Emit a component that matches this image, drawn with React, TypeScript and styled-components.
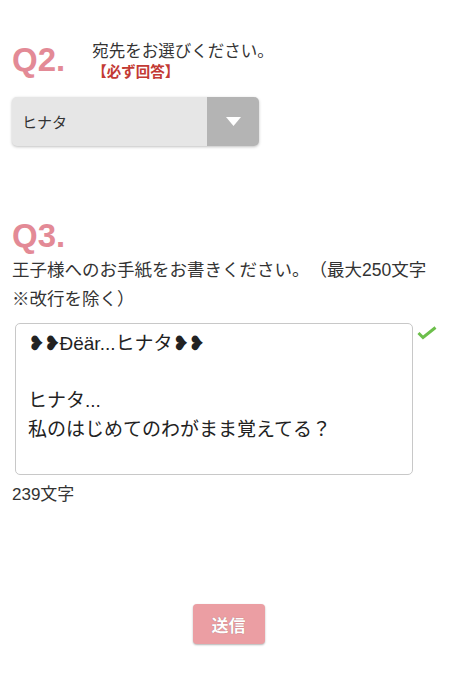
import React from 'react';
import styled, { createGlobalStyle } from 'styled-components';

const Global = createGlobalStyle`
  html, body {
    margin: 0;
    padding: 0;
    background: #fff;
  }
  body {
    font-family: "Liberation Sans", "Noto Sans CJK JP", sans-serif;
    color: #333;
    text-spacing-trim: space-all;
  }
`;

const Page = styled.div`
  width: 464px;
  height: 680px;
  padding: 40px 12px 0 12px;
  box-sizing: border-box;
  display: flex;
  flex-direction: column;
`;

const QuestionHead = styled.div`
  display: flex;
  align-items: flex-start;
  gap: 27px;
`;

const QNum = styled.div`
  font-family: "Liberation Sans", Arial, sans-serif;
  font-weight: 700;
  font-size: 33px;
  line-height: 40px;
  color: #e38a96;
`;

const QTitle = styled.div`
  display: flex;
  flex-direction: column;
`;

const Label = styled.div`
  font-size: 16.5px;
  line-height: 22px;
  color: #333;
`;

const Required = styled.div`
  font-size: 14.5px;
  line-height: 20px;
  font-weight: 700;
  color: #c33a34;
`;

const Select = styled.div`
  margin-top: 15px;
  width: 247px;
  height: 49px;
  border-radius: 5px;
  background: #e6e6e6;
  box-shadow: 0 1px 3px rgba(0, 0, 0, 0.25);
  display: flex;
  overflow: hidden;
`;

const SelectValue = styled.div`
  flex: 1;
  padding-left: 10px;
  display: flex;
  align-items: center;
  font-size: 15px;
  color: #333;
`;

const SelectArrow = styled.div`
  width: 52px;
  background: #b4b4b4;
  display: flex;
  align-items: center;
  justify-content: center;
`;

const Q3Head = styled(QNum)`
  margin-top: 70px;
`;

const Desc = styled.div`
  font-size: 17.5px;
  line-height: 29px;
  color: #333;
  white-space: nowrap;
`;

const FieldRow = styled.div`
  margin-top: 9px;
  display: flex;
  align-items: flex-start;
  gap: 4px;
  padding-left: 3px;
`;

const TextBox = styled.div`
  width: 398px;
  height: 152px;
  box-sizing: border-box;
  border: 1px solid #c8c8c8;
  border-radius: 5px;
  padding: 6px 12px;
  font-size: 19px;
  line-height: 28.5px;
  color: #222;
  white-space: pre-wrap;
`;

const Hearts = styled.span`
  font-family: "DejaVu Sans", sans-serif;
  font-size: 20px;
  line-height: 1;
  letter-spacing: -1px;
`;

const Check = styled.svg`
  margin-top: 3px;
  flex-shrink: 0;
`;

const Count = styled.div`
  margin-top: 9px;
  font-size: 17px;
  line-height: 22px;
  color: #333;
`;

const Submit = styled.button`
  align-self: center;
  margin-top: 98px;
  margin-right: 7px;
  width: 72px;
  height: 40px;
  border: none;
  border-radius: 4px;
  background: #eb9ea3;
  color: #fff;
  font-family: "Noto Sans CJK JP", sans-serif;
  font-size: 17px;
  font-weight: 700;
  box-shadow: 0 1px 2px rgba(0, 0, 0, 0.3);
  text-shadow: 0 0 1px rgba(0, 0, 0, 0.35);
`;

export default function App() {
  return (
    <>
      <Global />
      <Page>
        <QuestionHead>
          <QNum>Q2.</QNum>
          <QTitle>
            <Label>宛先をお選びください。</Label>
            <Required>【必ず回答】</Required>
          </QTitle>
        </QuestionHead>
        <Select>
          <SelectValue>ヒナタ</SelectValue>
          <SelectArrow>
            <svg width="15" height="9" viewBox="0 0 15 9">
              <path d="M0 0 L15 0 L7.5 9 Z" fill="#fff" />
            </svg>
          </SelectArrow>
        </Select>

        <Q3Head>Q3.</Q3Head>
        <Desc>
          王子様へのお手紙をお書きください。（最大250文字
          <br />
          ※改行を除く）
        </Desc>
        <FieldRow>
          <TextBox>
            <Hearts>❥❥</Hearts>Ðëär...ヒナタ<Hearts>❥❥</Hearts>
            {'\n\nヒナタ...\n私のはじめてのわがまま覚えてる？'}
          </TextBox>
          <Check width="20" height="14" viewBox="0 0 20 14">
            <path d="M1.5 7 L6 11.5 L18.5 1.5" fill="none" stroke="#6cbf4b" strokeWidth="3" />
          </Check>
        </FieldRow>
        <Count>239文字</Count>
        <Submit>送信</Submit>
      </Page>
    </>
  );
}
